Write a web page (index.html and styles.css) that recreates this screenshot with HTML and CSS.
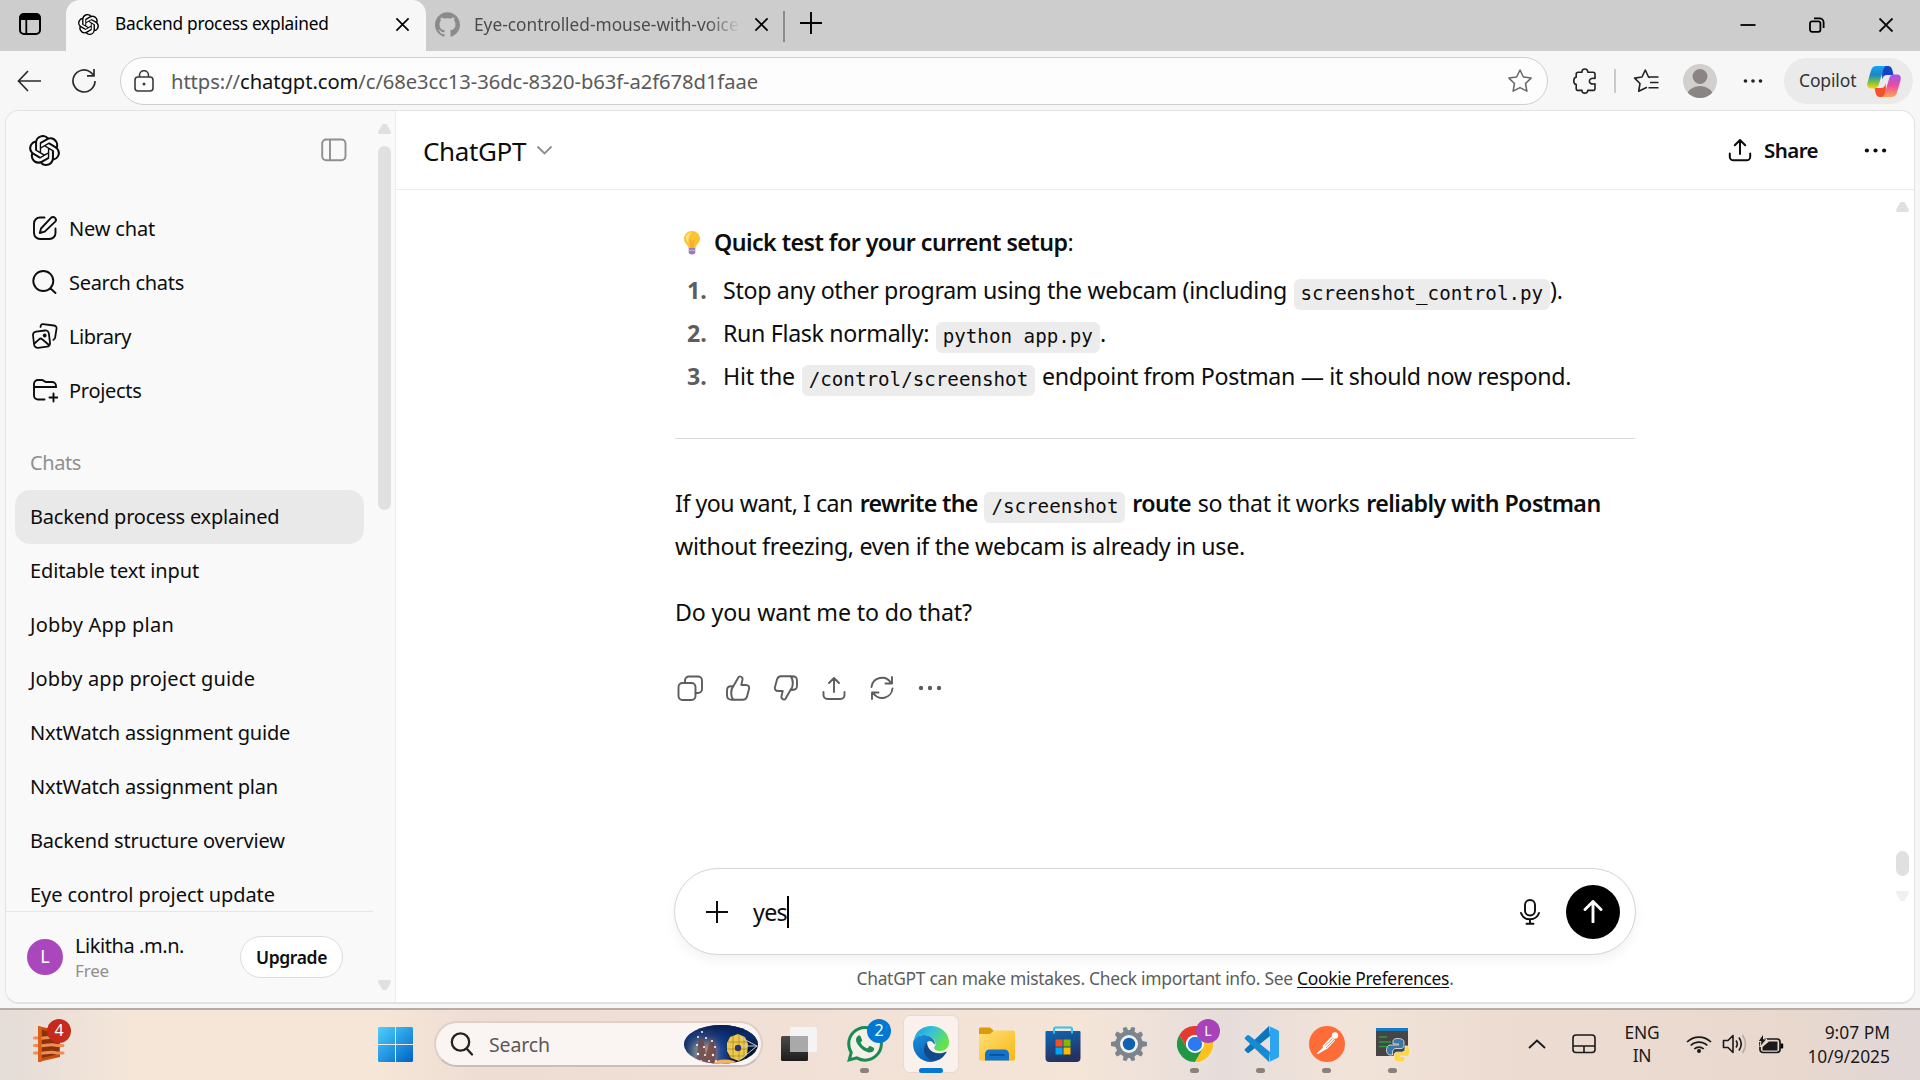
FILE: index.html
```html
<!DOCTYPE html>
<html lang="en">
<head>
<meta charset="utf-8">
<title>Backend process explained</title>
<link rel="stylesheet" href="styles.css">
</head>
<body>
<svg class="defs" width="0" height="0" aria-hidden="true">
  <symbol id="knot" viewBox="0 0 24 24"><path fill="currentColor" d="M22.2819 9.8211a5.9847 5.9847 0 0 0-.5157-4.9108 6.0462 6.0462 0 0 0-6.5098-2.9A6.0651 6.0651 0 0 0 4.9807 4.1818a5.9847 5.9847 0 0 0-3.9977 2.9 6.0462 6.0462 0 0 0 .7427 7.0966 5.98 5.98 0 0 0 .511 4.9107 6.051 6.051 0 0 0 6.5146 2.9001A5.9847 5.9847 0 0 0 13.2599 24a6.0557 6.0557 0 0 0 5.7718-4.2058 5.9894 5.9894 0 0 0 3.9977-2.9001 6.0557 6.0557 0 0 0-.7475-7.0729zm-9.022 12.6081a4.4755 4.4755 0 0 1-2.8764-1.0408l.1419-.0804 4.7783-2.7582a.7948.7948 0 0 0 .3927-.6813v-6.7369l2.02 1.1686a.071.071 0 0 1 .038.052v5.5826a4.504 4.504 0 0 1-4.4945 4.4944zm-9.6607-4.1254a4.4708 4.4708 0 0 1-.5346-3.0137l.142.0852 4.783 2.7582a.7712.7712 0 0 0 .7806 0l5.8428-3.3685v2.3324a.0804.0804 0 0 1-.0332.0615L9.74 19.9502a4.4992 4.4992 0 0 1-6.1408-1.6464zM2.3408 7.8956a4.485 4.485 0 0 1 2.3655-1.9728V11.6a.7664.7664 0 0 0 .3879.6765l5.8144 3.3543-2.0201 1.1685a.0757.0757 0 0 1-.071 0l-4.8303-2.7865A4.504 4.504 0 0 1 2.3408 7.872zm16.5963 3.8558L13.1038 8.364 15.1192 7.2a.0757.0757 0 0 1 .071 0l4.8303 2.7913a4.4944 4.4944 0 0 1-.6765 8.1042v-5.6772a.79.79 0 0 0-.407-.667zm2.0107-3.0231l-.142-.0852-4.7735-2.7818a.7759.7759 0 0 0-.7854 0L9.409 9.2297V6.8974a.0662.0662 0 0 1 .0284-.0615l4.8303-2.7866a4.4992 4.4992 0 0 1 6.6802 4.66zM8.3065 12.863l-2.02-1.1638a.0804.0804 0 0 1-.038-.0567V6.0742a4.4992 4.4992 0 0 1 7.3757-3.4537l-.142.0805L8.704 5.459a.7948.7948 0 0 0-.3927.6813zm1.0976-2.3654l2.602-1.4998 2.6069 1.4998v2.9994l-2.5974 1.4997-2.6067-1.4997Z"/></symbol>
  <symbol id="share" viewBox="0 0 24 24"><path fill="none" stroke="currentColor" stroke-width="2" stroke-linecap="round" stroke-linejoin="round" d="M12 16V2.2M6.8 7.2 12 2l5.2 5.2M1.8 15.5v3.2a3.6 3.6 0 0 0 3.6 3.6h13.2a3.6 3.6 0 0 0 3.6-3.6v-3.2"/></symbol>
  <symbol id="dots" viewBox="0 0 24 24"><g fill="currentColor"><circle cx="3" cy="12" r="2.2"/><circle cx="12" cy="12" r="2.2"/><circle cx="21" cy="12" r="2.2"/></g></symbol>
  <symbol id="cross" viewBox="0 0 16 16"><path stroke="currentColor" stroke-width="1.8" d="m1.5 1.5 13 13m0-13-13 13"/></symbol>
</svg>

<div class="tabstrip">
  <div class="workspace"><svg width="24" height="24" viewBox="0 0 24 24"><rect x="2" y="2" width="20" height="20" rx="4" fill="none" stroke="#000" stroke-width="2"/><path d="M1.5 8V5.5a4 4 0 0 1 4-4h13a4 4 0 0 1 4 4V8z"/><path d="M8.3 8v14" stroke="#000" stroke-width="1.8"/></svg></div>
  <div class="tab active">
    <svg width="21" height="21"><use href="#knot"/></svg>
    <span class="tab-title">Backend process explained</span>
    <svg class="x" width="15" height="15"><use href="#cross"/></svg>
  </div>
  <div class="tab">
    <svg class="gh" width="25" height="25" viewBox="0 0 24 24"><path fill="#8b8b8b" d="M12 .297c-6.63 0-12 5.373-12 12 0 5.303 3.438 9.8 8.205 11.385.6.113.82-.258.82-.577 0-.285-.01-1.04-.015-2.04-3.338.724-4.042-1.61-4.042-1.61C4.422 18.07 3.633 17.7 3.633 17.7c-1.087-.744.084-.729.084-.729 1.205.084 1.838 1.236 1.838 1.236 1.07 1.835 2.809 1.305 3.495.998.108-.776.417-1.305.76-1.605-2.665-.3-5.466-1.332-5.466-5.93 0-1.31.465-2.38 1.235-3.22-.135-.303-.54-1.523.105-3.176 0 0 1.005-.322 3.3 1.23.96-.267 1.98-.399 3-.405 1.02.006 2.04.138 3 .405 2.28-1.552 3.285-1.23 3.285-1.23.645 1.653.24 2.873.12 3.176.765.84 1.23 1.91 1.23 3.22 0 4.61-2.805 5.625-5.475 5.92.42.36.81 1.096.81 2.22 0 1.606-.015 2.896-.015 3.286 0 .315.21.69.825.57C20.565 22.092 24 17.592 24 12.297c0-6.627-5.373-12-12-12"/></svg>
    <span class="tab-title faded">Eye-controlled-mouse-with-voice</span>
    <svg class="x" width="15" height="15"><use href="#cross"/></svg>
  </div>
  <i class="tab-sep"></i>
  <svg class="newtab" width="22" height="22" viewBox="0 0 22 22"><path d="M11 0v22M0 11h22" stroke="#000" stroke-width="1.9"/></svg>
  <div class="winctl">
    <svg width="16" height="16" viewBox="0 0 16 16"><path d="M.5 8h15" stroke="#000" stroke-width="1.8"/></svg>
    <svg width="16" height="16" viewBox="0 0 16 16"><g fill="none" stroke="#000" stroke-width="1.8"><rect x="1" y="4.4" width="10.4" height="10.4" rx="2"/><path d="M5 1.4h5.6a4 4 0 0 1 4 4V11"/></g></svg>
    <svg width="16" height="16"><use href="#cross"/></svg>
  </div>
</div>

<div class="toolbar">
  <svg class="back" width="25" height="22" viewBox="0 0 25 22"><path d="M24 11H1.5M11 1 1.5 11 11 21" fill="none" stroke="#2a2a2a" stroke-width="1.7"/></svg>
  <svg class="reload" width="26" height="26" viewBox="0 0 26 26"><path d="M24 13a11 11 0 1 1-4.2-8.7L23 7.5M23 1v6.8h-7" fill="none" stroke="#2a2a2a" stroke-width="1.7"/></svg>
  <div class="omnibox">
    <svg width="20" height="22" viewBox="0 0 20 22"><g fill="none" stroke="#3a3a3a" stroke-width="1.6"><rect x="1" y="7" width="18" height="14" rx="3"/><path d="M5.5 7V5.2a4.500 4.500 0 0 1 9 0V7"/></g><circle cx="10" cy="14" r="1.5" fill="#3a3a3a"/></svg>
    <span class="url">https://<b>chatgpt.com</b>/c/68e3cc13-36dc-8320-b63f-a2f678d1faae</span>
    <svg class="star" width="26" height="26" viewBox="0 0 26 26"><path d="m13 2 3.400 7 7.700 1.100-5.600 5.400 1.400 7.700L13 19.600l-6.900 3.600 1.400-7.700-5.600-5.400L9.600 9z" fill="none" stroke="#666" stroke-width="1.500" stroke-linejoin="round"/></svg>
  </div>
  <svg class="puzzle" width="24" height="26" viewBox="0 0 24 26"><path d="M3.200 9.200V6.200c0-1.200.8-2 2-2H9c-.3-2 1-3.200 2.800-3.200s3.200 1.200 2.900 3.200H20c1.200 0 2 .8 2 2v4.300c-4-.8-5.600.8-5.600 2.700s1.600 3.300 5.600 2.600v4.600c0 1.200-.8 2-2 2h-5.300c.2 1.700-1.100 2.700-2.900 2.700S8.700 24 9 22.400H5.200c-1.200 0-2-.8-2-2v-4C1.700 16.300.8 15 .8 12.900s.9-3.600 2.400-3.700z" fill="none" stroke="#222" stroke-width="1.600" stroke-linejoin="round"/></svg>
  <i class="tool-sep"></i>
  <svg class="favs" width="26" height="26" viewBox="0 0 26 26"><path d="M17 9.500 15.500 9 12.300 2 9 9l-7.400 1.100L7 15.500l-1.300 7.700 8.300-4M15.500 9h10M17 14.500h8.500M15.500 19.800h10" fill="none" stroke="#222" stroke-width="1.600" stroke-linejoin="round"/></svg>
  <svg class="person" width="34" height="34" viewBox="0 0 34 34"><defs><clipPath id="pc"><circle cx="17" cy="17" r="17"/></clipPath></defs><g clip-path="url(#pc)"><path fill="#d2d0ce" d="M0 0h34v34H0z"/><circle cx="17" cy="12.500" r="7.400" fill="#8a8583"/><ellipse cx="17" cy="32" rx="13" ry="10" fill="#8a8583"/></g></svg>
  <svg class="menu" width="20" height="20"><use href="#dots"/></svg>
  <div class="copilot"><span>Copilot</span>
    <svg width="34" height="31" viewBox="0 0 34 31"><defs><linearGradient id="ca" x2="0" y2="1"><stop stop-color="#18a4f5"/><stop offset=".4" stop-color="#1a86c8"/><stop offset=".7" stop-color="#6fbf4a"/><stop offset="1" stop-color="#ffd400"/></linearGradient><linearGradient id="cb" x2="0" y2="1"><stop stop-color="#a553ee"/><stop offset=".5" stop-color="#ea4f9c"/><stop offset="1" stop-color="#ffa455"/></linearGradient></defs><path d="M15 0h6c2.500 0 3.500 1.500 4.200 3.500L26.500 9H20c-3 0-4 2-4.800 4.500z" fill="#1243c9"/><path d="M19 31h-6c-2.500 0-3.500-1.500-4.200-3.500L7.500 22H14c3 0 4-2 4.800-4.500z" fill="#f4512c"/><path d="M9.500 0H20c-2.200 0-3 1.600-3.700 3.700l-4.500 14.800C10.700 22 9 22.400 6.500 22.400H4C.5 22.400-.4 20 .6 16.300L4 4.500C5 1.300 6.600 0 9.500 0z" fill="url(#ca)"/><path d="M24.500 31H14c2.200 0 3-1.600 3.700-3.700l4.500-14.800c1.100-3.500 2.800-3.900 5.300-3.900H30c3.500 0 4.400 2.400 3.400 6.100L30 26.500c-1 3.200-2.600 4.500-5.500 4.500z" fill="url(#cb)"/></svg>
  </div>
</div>

<div class="page">
  <aside class="sidebar">
    <div class="side-head">
      <svg width="31" height="31"><use href="#knot"/></svg>
      <svg width="26" height="24" viewBox="0 0 26 24"><g fill="none" stroke="#8f8f8f" stroke-width="1.900"><rect x="1.200" y="1.500" width="23.300" height="20.700" rx="4"/><path d="M9 1.500v20.700"/></g></svg>
    </div>
    <nav class="links">
      <a><svg width="26" height="26" viewBox="0 0 26 26"><g fill="none" stroke="currentColor" stroke-width="1.900" stroke-linecap="round"><path d="M12.500 2.500H8a6 6 0 0 0-6 6V18a6 6 0 0 0 6 6h9.500a6 6 0 0 0 6-6v-4.500"/><path d="m9 13.500 10-10.600a2.800 2.800 0 0 1 4 4L12.700 16.600 7.800 18z" stroke-linejoin="round"/></g></svg><span>New chat</span></a>
      <a><svg width="26" height="26" viewBox="0 0 26 26"><g fill="none" stroke="currentColor" stroke-width="1.900" stroke-linecap="round"><circle cx="11.300" cy="12" r="10"/><path d="m18.500 19.500 5 4.500"/></g></svg><span>Search chats</span></a>
      <a><svg width="26" height="26" viewBox="0 0 26 26"><g fill="none" stroke="currentColor" stroke-width="1.800" stroke-linecap="round"><path d="m8.500 4 .3-1.200a2 2 0 0 1 2.200-1.600l10.800 1.300c2 .2 3 1.500 2.700 3.400l-1.300 8.300c-.2 1.500-.8 2.300-1.800 2.700"/><rect x="1.500" y="8" width="16" height="16.300" rx="3.500" transform="rotate(-7 9.500 16)"/><path d="M2.500 20.500 7 16.300c1-1 2.200-.9 3.200 0l6.500 5.500"/></g><circle cx="12.700" cy="12.500" r="1.900" fill="currentColor"/></svg><span>Library</span></a>
      <a><svg width="26" height="26" viewBox="0 0 26 26"><g fill="none" stroke="currentColor" stroke-width="1.900" stroke-linecap="round"><path d="M12.500 22.500H6a4 4 0 0 1-4-4V7a4 4 0 0 1 4-4h3.500c2.500 0 2.500 2 5 2H20a4 4 0 0 1 4 4v1H2M21.500 16.500v8M17.500 20.500h8"/></g></svg><span>Projects</span></a>
    </nav>
    <h2 class="group">Chats</h2>
    <ul class="chats">
      <li class="current">Backend process explained</li>
      <li>Editable text input</li>
      <li>Jobby App plan</li>
      <li>Jobby app project guide</li>
      <li>NxtWatch assignment guide</li>
      <li>NxtWatch assignment plan</li>
      <li>Backend structure overview</li>
      <li>Eye control project update</li>
    </ul>
    <div class="account">
      <div class="initial">L</div>
      <div class="who"><span>Likitha .m.n.</span><small>Free</small></div>
      <button class="upgrade">Upgrade</button>
    </div>
    <div class="bar side-bar"><i class="up"></i><i class="thumb"></i><i class="down"></i></div>
  </aside>

  <main class="main">
    <header class="topbar">
      <span class="model">ChatGPT</span>
      <svg width="17" height="10" viewBox="0 0 17 10"><path d="m1.500 1.500 7 7 7-7" fill="none" stroke="#8f8f8f" stroke-width="1.900"/></svg>
      <div class="share"><svg width="24" height="24"><use href="#share"/></svg><span>Share</span></div>
      <svg class="more" width="23" height="23"><use href="#dots"/></svg>
    </header>
    <article class="reply">
      <p class="lead"><svg width="18" height="25" viewBox="0 0 18 25"><path d="M9 1C4.500 1 1 4.400 1 8.700c0 4.600 4 5.600 4.500 9.300h7C13 14.300 17 13.300 17 8.700 17 4.400 13.500 1 9 1z" fill="#fcc433"/><path d="M9 2.500C5.500 2.500 3 5 3 8c0 2 1 3.500 2.500 5C5 8 6 4.500 9 2.500z" fill="#ffe48a"/><path d="M6.500 9.500 8 12v6m3.500-8.500L10 12v6" fill="none" stroke="#f59a23" stroke-width="1"/><path d="M5.700 18h6.600v4.500c0 1.300-1.500 2-3.300 2s-3.300-.7-3.300-2z" fill="#9a7ab8"/><path d="M5.700 20.300h6.600" stroke="#cdb5e0"/></svg><b>Quick test for your current setup</b>:</p>
      <ol>
        <li><span>Stop any other program using the webcam (including</span> <code>screenshot_control.py</code>).</li>
        <li><span>Run Flask normally:</span> <code>python app.py</code>.</li>
        <li><span class="hit">Hit the</span> <code>/control/screenshot</code> <span>endpoint from Postman — it should now respond.</span></li>
      </ol>
      <hr>
      <p class="offer"><span class="want">If you want, I can</span> <b class="rewrite">rewrite the</b> <code>/screenshot</code> <b>route</b> <span>so that it works</span> <b>reliably with Postman</b><br><span>without freezing, even if the webcam is already in use.</span></p>
      <p class="ask">Do you want me to do that?</p>
      <div class="actions">
        <svg width="26" height="26" viewBox="0 0 26 26"><rect x="1.500" y="8" width="17" height="17" rx="4"/><path d="M8 8V5.500a4 4 0 0 1 4-4h9a4 4 0 0 1 4 4v8.500a4 4 0 0 1-4 4h-2.500"/></svg>
        <svg width="26" height="26" viewBox="0 0 26 26"><path d="m8.500 11 4.700-8.300c.6-1.200 1-1.600 2-1.300 2 .5 2.700 1.800 2.200 3.800L16.300 10H21c2.300 0 3.600 1.800 3 4l-2 7.500c-.6 2.200-1.500 3.300-4 3.300H7c-3.500 0-5-1.500-5-4.500v-5C2 12 3.500 11 8.500 11c-2 2-2.300 3.500-2.300 7s.3 5 2.300 6.800"/></svg>
        <svg width="26" height="26" viewBox="0 0 26 26"><g transform="rotate(180 13 13)"><path d="m8.500 11 4.700-8.300c.6-1.200 1-1.600 2-1.300 2 .5 2.700 1.800 2.200 3.800L16.300 10H21c2.300 0 3.600 1.800 3 4l-2 7.500c-.6 2.200-1.500 3.300-4 3.300H7c-3.500 0-5-1.500-5-4.500v-5C2 12 3.500 11 8.500 11c-2 2-2.300 3.500-2.300 7s.3 5 2.300 6.800"/></g></svg>
        <svg width="26" height="26" viewBox="0 0 26 26"><path d="M13 17V3.500M8 8l5-5 5 5M2.500 17v3a4 4 0 0 0 4 4h13a4 4 0 0 0 4-4v-3"/></svg>
        <svg width="26" height="26" viewBox="0 0 26 26"><path d="M2.500 12A10.500 10.500 0 0 1 22 8M23 2v6.500h-6.500M23.500 13.500A10.500 10.500 0 0 1 4 17.800M3 24v-6.500h6.500"/></svg>
        <svg class="fill" width="24" height="24"><use href="#dots"/></svg>
      </div>
    </article>
    <div class="composer">
      <svg width="22" height="22" viewBox="0 0 22 22"><path d="M11 0v22M0 11h22" stroke="#0d0d0d" stroke-width="2"/></svg>
      <span class="draft">yes</span><i class="caret"></i>
      <svg class="mic" width="20" height="26" viewBox="0 0 20 26"><g fill="none" stroke="#0d0d0d" stroke-width="1.900" stroke-linecap="round"><rect x="5" y="1" width="10" height="15.500" rx="5"/><path d="M1 14c1.500 4.300 5 6.300 9 6.300s7.500-2 9-6.300M10 20.500v4M6.500 24.700h7"/></g></svg>
      <button class="send"><svg width="20" height="23" viewBox="0 0 20 23"><path d="M10 22V2M2 9.500l8-8 8 8" fill="none" stroke="#fff" stroke-width="2.900" stroke-linecap="round" stroke-linejoin="round"/></svg></button>
    </div>
    <p class="note">ChatGPT can make mistakes. Check important info. See <u>Cookie Preferences</u>.</p>
    <div class="bar main-bar"><i class="up"></i><i class="thumb"></i><i class="down"></i></div>
  </main>
</div>

<footer class="taskbar">
  <div class="widget"><svg width="32" height="38" viewBox="0 0 32 38"><path d="M5 1v36l22-5V6z" fill="#c84e0e"/><path d="M9 5v28l17-4V8z" fill="#8c3206"/><g stroke="#ee8d57" stroke-width="3" fill="none" stroke-linecap="round"><path d="M1.500 13H6c6 1 10-2 18 0h6M1.500 20.500H6c6 1 10-2 18 0h6M1.500 28H6c6 1 10-2 18 0h6"/></g><path d="M5 1v36h3.500V2z" fill="#dd5f17"/></svg><span class="badge red">4</span></div>
  <svg class="start" width="35" height="35" viewBox="0 0 35 35"><defs><linearGradient id="wn" gradientUnits="userSpaceOnUse" x1="0" y1="0" x2="32" y2="35"><stop stop-color="#4fd0ff"/><stop offset="1" stop-color="#0067c8"/></linearGradient></defs><path fill="url(#wn)" d="M1 0h16v17H0V1zM18 0h16l1 1v16H18zM0 18h17v17H1l-1-1zM18 18h17v16l-1 1H18z"/></svg>
  <div class="search">
    <svg width="24" height="24" viewBox="0 0 24 24"><g fill="none" stroke="#222" stroke-width="2.300" stroke-linecap="round"><circle cx="10.500" cy="10" r="8.700"/><path d="m17 17 5 5.500"/></g></svg>
    <span>Search</span>
    <svg class="scene" width="74" height="39" viewBox="0 0 74 39"><defs><clipPath id="sc"><ellipse cx="37" cy="19.500" rx="37" ry="19.500"/></clipPath><linearGradient id="sky" x2="1"><stop stop-color="#0a2560"/><stop offset=".2" stop-color="#8a9a9c"/><stop offset=".35" stop-color="#b08868"/><stop offset=".5" stop-color="#244a9a"/><stop offset=".7" stop-color="#04182e"/></linearGradient><linearGradient id="dusk" x2="0" y2="1"><stop stop-color="#061d4c"/><stop offset=".3" stop-color="#0b2f78" stop-opacity=".8"/><stop offset=".6" stop-color="#0b2f78" stop-opacity="0"/></linearGradient></defs><g clip-path="url(#sc)"><path fill="url(#sky)" d="M0 0h74v39H0z"/><path d="M0 0h74v39H0z" fill="url(#dusk)"/><path d="M28 39q8-7 22-3l6 3z" fill="#f3b266"/><path d="m12 39 2-20 3-9 3 8 2 12 3-11 4-5 3 12-2 13z" fill="#6e4448" opacity=".8"/><g fill="#fff"><circle cx="18" cy="7" r="1"/><circle cx="14" cy="12" r="1"/><circle cx="22" cy="13" r="1"/><circle cx="13" cy="20" r="1"/><circle cx="20" cy="22" r="1"/><circle cx="28" cy="16" r="1"/><circle cx="31" cy="22" r="1"/><circle cx="14" cy="29" r="1.200"/><circle cx="21" cy="30" r="1"/><circle cx="29" cy="30" r="1.200"/><circle cx="17" cy="36" r="1"/><circle cx="25" cy="36" r="1"/><circle cx="32" cy="36" r="1"/></g><path d="m46 12 8-3 7 3 3 7-1 11-8 6-8-3-4-7v-8z" fill="#ecc94a"/><path d="M44 17h19M43 24h20M45 31h17M49 11v23M55 9v27M60 12v22" stroke="#9c7820" stroke-width=".6"/><circle cx="54" cy="23" r="3.200" fill="#32356e"/><path d="M73 21 56 12M73 21H58M73 21 57 34" stroke="#c8c8e0" stroke-width="1"/></g></svg>
  </div>
  <div class="apps">
    <div class="app"><svg width="38" height="36" viewBox="0 0 38 36"><defs><linearGradient id="tv" x2="0" y2="1"><stop stop-color="#4b4b4b"/><stop offset="1" stop-color="#1c1c1c"/></linearGradient></defs><rect x="1" y="10" width="27" height="25" rx="1.500" fill="url(#tv)"/><rect x="10" y="1" width="27" height="25" rx="1.500" fill="#f4f4f4"/><rect x="10" y="10" width="18" height="16" fill="#a9a9a9"/></svg></div>
    <div class="app run"><svg width="36" height="36" viewBox="0 0 24 24"><path fill="#f5efe9" d="M2 22 3.500 17 1.500 9 8 1.500h8L23 9l-1 7-6 6-8-.5z"/><path fill="#1b8a54" d="M17.472 14.382c-.297-.149-1.758-.867-2.030-.967-.273-.099-.471-.148-.670.150-.197.297-.767.966-.940 1.164-.173.199-.347.223-.644.075-.297-.150-1.255-.463-2.390-1.475-.883-.788-1.480-1.761-1.653-2.059-.173-.297-.018-.458.130-.606.134-.133.298-.347.446-.520.149-.174.198-.298.298-.497.099-.198.050-.371-.025-.520-.075-.149-.669-1.612-.916-2.207-.242-.579-.487-.500-.669-.510-.173-.008-.371-.010-.570-.010-.198 0-.520.074-.792.372-.272.297-1.040 1.016-1.040 2.479 0 1.462 1.065 2.875 1.213 3.074.149.198 2.096 3.200 5.077 4.487.709.306 1.262.489 1.694.625.712.227 1.360.195 1.871.118.571-.085 1.758-.719 2.006-1.413.248-.694.248-1.289.173-1.413-.074-.124-.272-.198-.570-.347m-5.421 7.403h-.004a9.870 9.870 0 0 1-5.031-1.378l-.361-.214-3.741.982.998-3.648-.235-.374a9.860 9.860 0 0 1-1.510-5.260c.001-5.450 4.436-9.884 9.888-9.884 2.640 0 5.122 1.030 6.988 2.898a9.825 9.825 0 0 1 2.893 6.994c-.003 5.450-4.437 9.884-9.885 9.884m8.413-18.297A11.815 11.815 0 0 0 12.050 0C5.495 0 .160 5.335.157 11.892c0 2.096.547 4.142 1.588 5.945L.057 24l6.305-1.654a11.882 11.882 0 0 0 5.683 1.448h.005c6.554 0 11.890-5.335 11.893-11.893a11.821 11.821 0 0 0-3.480-8.413z"/></svg><span class="badge blue">2</span></div>
    <div class="app open"><svg width="36" height="36" viewBox="0 0 36 36"><defs><linearGradient id="e1" x2="1" y2=".5"><stop stop-color="#1f9be0"/><stop offset=".5" stop-color="#36c3d6"/><stop offset="1" stop-color="#66e347"/></linearGradient><linearGradient id="e2" x2=".5" y2="1"><stop stop-color="#1a8fdc"/><stop offset="1" stop-color="#0a62b8"/></linearGradient></defs><path d="M1 13C3 5 10 0 18 0c10 0 18 7 18 16 0 6-4 9-9 9-4 0-6-1.500-6-3 0-1 1.500-1.500 1.500-4C22.500 13 17 9 11 9 6 9 3 11 1 13z" fill="url(#e1)"/><path d="M0 18C0 12 5 9 11 9c6 0 11 4 11 9h-1c-1-2-3-3-4-3-3 0-6 4-5 9 1 6 6 10 12 10-2 1.300-4 2-6 2C8 36 0 28 0 18z" fill="url(#e2)"/><path d="M14 16c-3 3-4.500 9-1 14 4 6 12 6 17 1l3.500-4.500c.3-.8-.2-1-1-.6C25 29 14.500 27 14 16z" fill="#114a8b"/></svg></div>
    <div class="app"><svg width="36" height="34" viewBox="0 0 36 34"><defs><linearGradient id="fo" x2="1" y2="1"><stop stop-color="#ffe07a"/><stop offset="1" stop-color="#f8b813"/></linearGradient></defs><path d="M0 2a1.500 1.500 0 0 1 1.500-1.500H11L15 4v5H0z" fill="#dc9b09"/><path d="M0 7h11l4-3.500h19.500A1.500 1.500 0 0 1 36 5v27a1.500 1.500 0 0 1-1.500 1.500h-33A1.500 1.500 0 0 1 0 32z" fill="url(#fo)"/><path d="M6 33.500V27a4.500 4.500 0 0 1 4.500-4.500h15A4.500 4.500 0 0 1 30 27v6.500z" fill="#1273cc"/><path d="M11 27.800h14" stroke="#0b4f96" stroke-width="1.800" stroke-linecap="round"/></svg></div>
    <div class="app"><svg width="36" height="36" viewBox="0 0 36 36"><defs><linearGradient id="st" x2=".3" y2="1"><stop stop-color="#0d67b8"/><stop offset="1" stop-color="#26315e"/></linearGradient></defs><path d="M9 8V3a1.500 1.500 0 0 1 1.500-1.500h15A1.500 1.500 0 0 1 27 3v5" fill="none" stroke="#35c1f1" stroke-width="2"/><path d="M.5 6a1 1 0 0 1 1-1h33a1 1 0 0 1 1 1v26a4 4 0 0 1-4 4h-27a4 4 0 0 1-4-4z" fill="url(#st)"/><path d="M9 5v2.500M27 5v2.500" stroke="#35c1f1" stroke-width="2"/><path fill="#f25022" d="M10.500 13.500h7v7h-7z"/><path fill="#7fba00" d="M18.500 13.500h7v7h-7z"/><path fill="#00a4ef" d="M10.500 21.500h7v7h-7z"/><path fill="#ffb900" d="M18.500 21.500h7v7h-7z"/></svg></div>
    <div class="app"><svg width="36" height="36" viewBox="0 0 36 36"><path d="M12.500 5.500 11.800 2Q14 1 15.500 1L17 4h2l1.500-3q2 0 3.700 1l-.7 3.500 2.500 2L30 5.500q1.500 1.500 2 3.500l-2 2.500 1.500 3.500 4.500 1v4l-4.500 1-1.500 3.500 2 2.500q-.5 2-2 3.500l-4-2-2.500 2 .7 3.500q-1.700 1-3.700 1L19 32h-2l-1.500 3q-2 0-3.700-1l.7-3.500-2.500-2-4 2Q4.500 29 4 27l2-2.500L4.500 21 0 20v-4l4.500-1L6 11.500 4 9q.5-2 2-3.500l4 2z" fill="#7c858e"/><circle cx="18" cy="18" r="9" fill="#f1f1f1"/><circle cx="18" cy="18" r="6.200" fill="#0f62b0"/></svg></div>
    <div class="app run"><svg width="36" height="36" viewBox="0 0 36 36"><path d="M2.400 9A18 18 0 0 0 18 36l8-13.500H10.200z" fill="#219645"/><path d="M33.600 9A18 18 0 0 1 18 36l7.800-13.500L25.800 9z" fill="#fcc21b"/><path d="M2.400 9A18 18 0 0 1 33.600 9H18a9 9 0 0 0-7.800 13.500z" fill="#e33b2e"/><circle cx="18" cy="18" r="9" fill="#fff"/><circle cx="18" cy="18" r="7.200" fill="#2a7bf0"/></svg><span class="badge purple">L</span></div>
    <div class="app run"><svg width="36" height="36" viewBox="0 0 36 36"><path d="M26 0 2.500 22.500c-1 .8-1 1.500-.3 2.300L4 26.500c.7.700 1.500.7 2.300 0L27 10z" fill="#0b76bd"/><path d="M26 36 2.500 13.500c-1-.8-1-1.500-.3-2.300L4 9.500c.7-.7 1.500-.7 2.300 0L27 26z" fill="#168ad2"/><path d="M26 0l8.500 4c1 .5 1.500 1 1.500 2v24c0 1-.5 1.500-1.500 2L26 36c-.7.200 1-1 1-2V2c0-1-1.500-2-1-2z" fill="#2ca4f0"/></svg></div>
    <div class="app run"><svg width="36" height="36" viewBox="0 0 36 36"><circle cx="18" cy="18" r="18" fill="#ff6c37"/><circle cx="26" cy="9.500" r="3.200" fill="#fff"/><path d="M22.500 10.500 26 14.500l-5 5.500-2.500 2.500L9 28l-1.500-.5L14 21.500l-.5-1.500z" fill="#fff"/><path d="m15.500 20 8-7.500M17 22l8-8" stroke="#ff6c37" stroke-width=".8"/></svg></div>
    <div class="app run"><svg width="36" height="36" viewBox="0 0 36 36"><path fill="#454545" d="M1 2h32v28H1z"/><path fill="#1679c4" d="M1 2h32v3H1z"/><path d="M4 11h8M4 16h12M4 20.500h8" stroke="#2f9a3c" stroke-width="1.500"/><path d="M23 12.500c-5 0-5 2-5 3.500V18h5.500v1H15.500c-3 0-4 2.500-4 5s1 5 3.500 5h2.500v-3c0-2 1.500-3.500 3.500-3.500h5c2 0 3-1.500 3-3V16c0-2-2-3.500-6-3.500z" fill="#3b77a8" stroke="#eee" stroke-width=".8"/><path d="M25 36c5 0 5-2 5-3.500v-2h-5v-1h7c3 0 3-2.500 3-4.500s-1-5-3-5h-2v3c0 2-1.500 3.200-3.500 3.200h-4.500c-2 0-3 1.300-3 3.300v3c0 2 2 3.500 6 3.500z" fill="#ffd746" stroke="#eee" stroke-width=".8"/></svg></div>
  </div>
  <div class="tray">
    <svg class="chev" width="18" height="10" viewBox="0 0 18 10"><path d="m1 9 8-7.500L17 9" fill="none" stroke="#1a1a1a" stroke-width="1.800"/></svg>
    <svg class="pad" width="24" height="20" viewBox="0 0 24 20"><g fill="none" stroke="#1a1a1a" stroke-width="1.600"><rect x="1" y="1" width="22" height="17.500" rx="3"/><path d="M1 12h22M12 12v6.500"/></g></svg>
    <div class="lang">ENG<br>IN</div>
    <svg class="wifi" width="26" height="20" viewBox="0 0 26 20"><g fill="none" stroke="#1a1a1a" stroke-width="1.700"><path d="M1 8a17 17 0 0 1 24 0M4.700 11.500a11.700 11.700 0 0 1 16.600 0M8.300 15a6.600 6.600 0 0 1 9.400 0"/></g><circle cx="13" cy="17" r="2" fill="#1a1a1a"/></svg>
    <svg class="vol" width="26" height="22" viewBox="0 0 26 22"><g fill="none" stroke="#1a1a1a" stroke-width="1.600" stroke-linejoin="round"><path d="M1.500 7.500H6L11 2.500v17l-5-5H1.500z"/><path d="M14 7.500q2.500 3.500 0 7M17 4.500q4.500 6.500 0 13"/><path d="M20.500 2q6 9 0 18" stroke="#b7aca6"/></g></svg>
    <svg class="bat" width="26" height="20" viewBox="0 0 26 20"><rect x="2" y="5" width="20" height="13.500" rx="3" fill="none" stroke="#1a1a1a" stroke-width="1.700"/><path d="M22.500 9.500h1.700q1 0 1 1v3q0 1-1 1h-1.700z"/><path d="M4.500 16.500v-3.500l6.500-5.500h8.500v9z" fill="#1a1a1a"/><path d="m5.500-.5-5.500 8h3l-1 5.500 7-8H5.500z" fill="#1a1a1a" stroke="#eadbd2" stroke-width="1"/></svg>
    <div class="clock">9:07 PM<br>10/9/2025</div>
  </div>
</footer>
</body>
</html>
```
FILE: styles.css
```css
* { box-sizing: border-box; }
body { margin: 0; width: 1920px; height: 1080px; overflow: hidden; display: flex; flex-direction: column; background: #f7f7f7; color: #0d0d0d; font-family: "Noto Sans", "Open Sans", sans-serif; white-space: nowrap; }
svg { display: block; flex: none; }
.defs { position: absolute; }
button { font: inherit; color: inherit; padding: 0; border: 0; }

/* tab strip */
.tabstrip { height: 51px; flex: none; display: flex; background: #cdcdcd; }
.workspace { width: 66px; height: 51px; padding: 12px 0 0 18px; }
.tab { display: flex; align-items: center; height: 49px; width: 357px; padding-left: 9px; color: #4c4c4c; }
.tab.active { width: 360px; height: 51px; background: #f7f7f7; border-radius: 14px 14px 0 0; padding: 0 0 3px 12px; color: #000; }
.tab-title { font-size: 17.3px; line-height: 24px; margin-left: 16px; width: 266px; overflow: hidden; }
.active .tab-title { letter-spacing: -.25px; }
.tab:not(.active) .tab-title { margin-left: 14px; }
.faded { -webkit-mask-image: linear-gradient(90deg, #000 88%, transparent); mask-image: linear-gradient(90deg, #000 88%, transparent); }
.x { margin-left: 14px; color: #000; }
.tab-sep { width: 2px; height: 31px; margin: 11px 15px 0 0; background: #8b8b8b; }
.newtab { margin-top: 12px; }
.winctl { display: flex; gap: 53px; margin: 17px 26px 0 auto; }

/* toolbar */
.toolbar { height: 59px; flex: none; display: flex; align-items: center; padding: 1px 7px 0 17px; }
.reload { margin-left: 29px; }
.omnibox { width: 1428px; height: 48px; margin-left: 23px; padding: 0 14px 0 13px; display: flex; align-items: center; background: #fdfdfd; border: 1.5px solid #cfcfcf; border-radius: 24px; }
.url { margin-left: 17px; font-size: 20.2px; letter-spacing: -.07px; color: #5a5a5a; }
.url b { font-weight: 400; color: #111; }
.star { margin-left: auto; }
.puzzle { margin-left: 25px; }
.tool-sep { width: 2px; height: 24px; margin: 0 17px; background: #cacaca; }
.person { margin-left: 24px; }
.menu { margin-left: 26px; color: #222; }
.copilot { margin-left: auto; width: 129px; height: 46px; padding: 0 12px 0 15px; display: flex; align-items: center; justify-content: space-between; background: #eaeaea; border-radius: 23px; font-size: 17.5px; letter-spacing: -.15px; color: #333; }
.copilot span { margin-top: -3px; }

/* page surface */
.page { height: 894px; margin: 0 5px; flex: none; display: flex; background: #fff; border: 1px solid #e2e2e2; border-bottom-width: 2px; border-radius: 14px; overflow: hidden; }
.sidebar { position: relative; width: 390px; background: #f9f9f9; border-right: 1px solid #ececec; display: flex; flex-direction: column; }
.side-head { display: flex; align-items: center; justify-content: space-between; height: 78px; padding: 0 48px 0 23px; }
.links { margin-top: 12px; }
.links a { display: flex; align-items: center; height: 54px; padding-left: 26px; gap: 11px; font-size: 20px; letter-spacing: -.29px; }
.links a:nth-child(1) { letter-spacing: -.18px; }
.links a:nth-child(3) { letter-spacing: -.5px; }
.group { margin: 32px 0 0 24px; font-size: 20px; line-height: 28px; font-weight: 400; letter-spacing: -.41px; color: #8f8f8f; }
.chats { list-style: none; margin: 13px 31px 0 9px; padding: 0; height: 421px; overflow: hidden; }
.chats li { height: 54px; padding-left: 15px; line-height: 54px; font-size: 20px; letter-spacing: -.2px; border-radius: 15px; }
.chats .current { background: #e9e9e9; }
.chats li:nth-child(2) { letter-spacing: -.13px; }
.chats li:nth-child(3) { letter-spacing: .23px; }
.chats li:nth-child(4) { letter-spacing: .12px; }
.chats li:nth-child(8) { letter-spacing: -.07px; }
.account { width: 367px; flex: 1; border-top: 1px solid #e6e6e6; display: flex; align-items: flex-start; padding: 24px 0 0 21px; }
.initial { width: 36px; height: 36px; margin-top: 3px; border-radius: 50%; background: #ab47bc; color: #fff; font-size: 18px; line-height: 35px; text-align: center; }
.who { margin: -3px 0 0 12px; width: 165px; display: flex; flex-direction: column; font-size: 20px; line-height: 25px; letter-spacing: -.43px; }
.who small { font-size: 17px; line-height: 25px; letter-spacing: -.17px; color: #8f8f8f; }
.upgrade { width: 103px; height: 42px; background: #fff; border: 1px solid #dcdcdc; border-radius: 21px; font-size: 17.5px; font-weight: 600; letter-spacing: -.38px; }

/* scrollbars */
.bar { position: absolute; width: 13px; display: flex; flex-direction: column; }
.bar i { display: block; background: #e0e0e0; }
.bar .up, .bar .down { height: 10px; clip-path: polygon(35% 0, 65% 0, 100% 80%, 95% 100%, 5% 100%, 0 80%); }
.bar .down { margin-top: auto; transform: scaleY(-1); }
.bar .thumb { border-radius: 7px; }
.side-bar { left: 372px; top: 13px; bottom: 12px; }
.side-bar .thumb { height: 364px; margin-top: 12px; }
.main-bar { right: 5px; top: 91px; height: 699px; }
.main-bar .thumb { height: 25px; margin-top: 639px; }
.main-bar .down { margin-top: 15px; background: #f0f0f0; }

/* conversation */
.main { position: relative; flex: 1; display: flex; flex-direction: column; }
.topbar { height: 79px; flex: none; display: flex; align-items: center; padding: 0 27px 0 27px; border-bottom: 1px solid #ececec; }
.model { font-size: 26px; margin-top: 1px; letter-spacing: -.37px; }
.model + svg { margin-left: 10px; }
.share { display: flex; align-items: center; gap: 12px; margin-left: auto; font-size: 20.5px; font-weight: 600; letter-spacing: -.57px; }
.more { margin-left: 46px; }
.reply { width: 960px; height: 678px; margin-left: 279px; font-size: 23.2px; line-height: 43px; letter-spacing: -.33px; }
.reply p { margin: 0; }
.reply b { font-weight: 600; letter-spacing: -.54px; margin-right: 1px; }
.reply span { margin-right: 1px; }
.lead { display: flex; align-items: center; padding: 31px 0 0 8px; }
.lead svg { margin-right: 13px; }
.lead b { margin-right: 0; }
ol { list-style: none; counter-reset: n; margin: 5px 0 0; padding: 0; }
ol li { counter-increment: n; padding-left: 48px; height: 43px; position: relative; }
ol li::before { content: counter(n) "."; position: absolute; left: 12px; font-weight: 700; letter-spacing: 0; color: #5d5d5d; }
.reply .hit { letter-spacing: -.19px; }
.reply .want { letter-spacing: -.48px; }
.reply .rewrite { letter-spacing: -.67px; }
code { display: inline-block; font: 19.2px/28px "DejaVu Sans Mono", monospace; letter-spacing: 0; background: #ececec; border-radius: 6px; padding: 1px 7px 0; height: 31px; position: relative; top: 1px; }
code:not(:last-child) { margin-right: 1px; }
hr { margin: 40px 0 43px; border: 0; height: 1px; background: #d9d9d9; }
.ask { padding-top: 23px; letter-spacing: -.15px; }
.actions { display: flex; align-items: center; margin-top: 41px; padding-left: 2px; gap: 22px; color: #5d5d5d; }
.actions svg { fill: none; stroke: currentColor; stroke-width: 1.9; stroke-linejoin: round; stroke-linecap: round; }
.actions .fill { stroke: none; margin-left: 1px; }
.composer { width: 962px; height: 87px; flex: none; margin-left: 278px; padding: 0 15px 0 31px; display: flex; align-items: center; border: 1px solid #d4d4d4; border-radius: 44px; background: #fff; box-shadow: 0 6px 12px rgba(0,0,0,.05); }
.draft { margin-left: 25px; font-size: 23.2px; letter-spacing: -.67px; }
.caret { width: 2px; height: 32px; background: #000; }
.mic { margin-left: auto; }
.send { width: 54px; height: 54px; margin-left: 26px; border-radius: 50%; background: #000; display: flex; align-items: center; justify-content: center; }
.note { margin: 10px 0 0; text-align: center; font-size: 17.4px; line-height: 26px; letter-spacing: -.27px; color: #5d5d5d; }
.note u { color: #0d0d0d; text-underline-offset: 2px; text-decoration-thickness: 1px; }

/* taskbar */
.taskbar { height: 72px; margin-top: 4px; padding-bottom: 2px; flex: none; display: flex; align-items: center; border-top: 2px solid #b8ada6; background: linear-gradient(90deg, #e4dcd8 0, #f5e6d8 130px, #f5e6d8 380px, #eeddd3 480px, #f1e0d5 800px, #f5e5d8 1080px, #e6dddb 1225px, #f2e3d8 1350px, #ecdcd2 1500px, #e8d8ce 1800px, #e0d7d7 1920px); }
.widget { position: relative; width: 32px; margin-left: 33px; }
.badge { position: absolute; width: 24px; height: 24px; border-radius: 50%; color: #fff; font-size: 16px; line-height: 23px; text-align: center; }
.badge.red { left: 14px; top: -6px; background: #c42b1c; }
.badge.blue { left: 35px; top: 6px; background: #0078d4; }
.badge.purple { left: 34px; top: 6px; background: #a742b8; font-size: 14px; line-height: 24px; }
.start { margin-left: 313px; }
.search { width: 329px; height: 46px; margin-left: 21px; padding: 0 3px 0 14px; display: flex; align-items: center; border: 2px solid #dfd0c8; border-bottom-color: #cbbeb8; border-radius: 23px; background: #faf5f2; color: #5c5855; font-size: 19.5px; letter-spacing: -.12px; }
.search span { margin-left: 15px; }
.scene { margin-left: auto; }
.apps { display: flex; margin-left: 3px; }
.app { position: relative; width: 66px; height: 62px; display: flex; align-items: center; justify-content: center; }
.app.open { width: 56px; height: 58px; margin: 2px 5px; background: #faf1ec; border: 1px solid #e8dad1; border-radius: 7px; }
.run::after { content: ""; position: absolute; left: 28px; bottom: 2px; width: 9px; height: 5px; border-radius: 3px; background: #8a817c; }
.open::after { content: ""; position: absolute; left: 15px; bottom: -1px; width: 24px; height: 5px; border-radius: 3px; background: #0078d4; }
.tray { flex: 1; display: flex; align-items: center; margin-left: 102px; color: #1a1a1a; font-size: 17.4px; }
.pad { margin-left: 26px; }
.lang { width: 40px; margin-left: 26px; text-align: center; line-height: 23px; letter-spacing: -.2px; }
.wifi { margin-left: 24px; }
.vol { margin-left: 10px; }
.bat { margin-left: 10px; }
.clock { margin-left: auto; margin-right: 30px; text-align: right; line-height: 24px; }
```
